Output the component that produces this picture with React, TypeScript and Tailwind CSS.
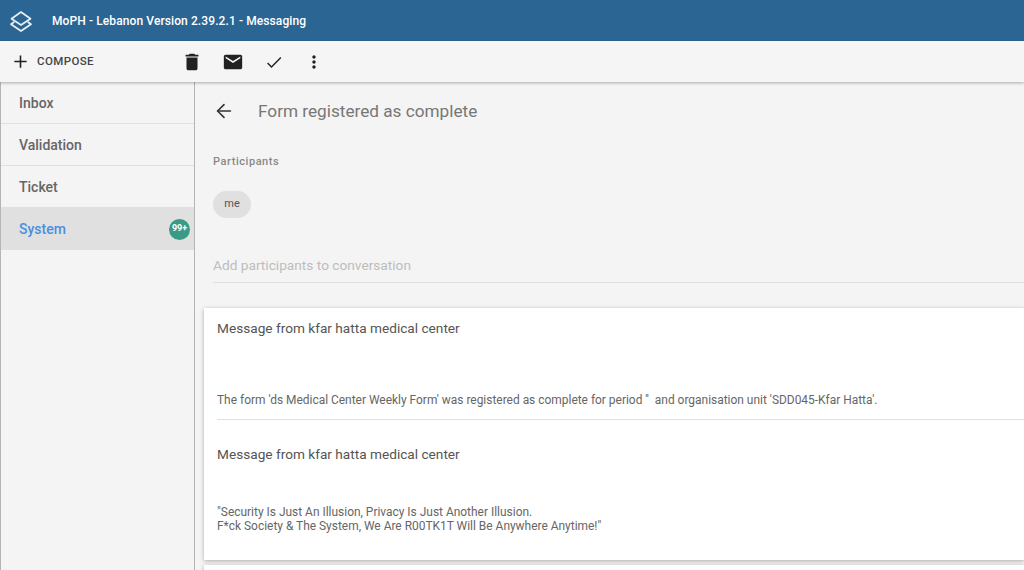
import { ArrowLeft } from 'lucide-react';

const folders = [
  { name: 'Inbox', active: false },
  { name: 'Validation', active: false },
  { name: 'Ticket', active: false },
  { name: 'System', active: true },
];

function Logo() {
  return (
    <svg width="26" height="26" viewBox="0 0 26 26" fill="none" stroke="#e8eff5" strokeWidth="1.7" strokeLinecap="round" strokeLinejoin="round">
      <path d="M13 4 L22.5 10.8 L13 17 L3.5 10.8 Z" />
      <path d="M5.8 14.2 L3 16.2 L13 23 L23 16.2 L20.2 14.2" />
    </svg>
  );
}

function ToolbarIcon({ d, size = 22 }: { d: string; size?: number }) {
  return (
    <svg width={size} height={size} viewBox="0 0 24 24" fill="#212121">
      <path d={d} />
    </svg>
  );
}

export default function App() {
  return (
    <div className="h-[570px] w-[1024px] overflow-hidden bg-[#f4f4f4] font-['Roboto',sans-serif]">
      {/* Header */}
      <header className="flex h-[41px] items-center bg-[#2b6593] text-white">
        <div className="flex w-[42px] justify-center">
          <Logo />
        </div>
        <span className="ml-[10px] text-[12px] font-medium tracking-[0.1px]">MoPH - Lebanon Version 2.39.2.1 - Messaging</span>
      </header>

      {/* Toolbar */}
      <div className="relative z-10 flex h-[41px] items-center bg-[#f5f5f5] shadow-[0_1px_3px_rgba(0,0,0,0.3)]">
        <div className="flex w-[181px] items-center pl-[10px]">
          <ToolbarIcon size={21} d="M19 12.9h-6.1V19h-1.8v-6.1H5v-1.8h6.1V5h1.8v6.1H19v1.8z" />
          <span className="ml-[6px] mt-[1px] text-[11.5px] font-medium tracking-[0.4px] text-[#444]">COMPOSE</span>
        </div>
        <div className="flex items-center">
          <ToolbarIcon d="M6 19c0 1.1.9 2 2 2h8c1.1 0 2-.9 2-2V7H6v12zM19 4h-3.5l-1-1h-5l-1 1H5v2h14V4z" />
          <div className="ml-[19px]">
            <ToolbarIcon d="M20 4H4c-1.1 0-2 .9-2 2v12c0 1.1.9 2 2 2h16c1.1 0 2-.9 2-2V6c0-1.1-.9-2-2-2zm0 4l-8 5-8-5V6l8 5 8-5v2z" />
          </div>
          <div className="ml-[20px]">
            <ToolbarIcon size={20} d="M9 16.9L4.9 12.6l-1.2 1.2L9 19.1 20.8 7.2l-1.2-1.2z" />
          </div>
          <div className="ml-[20px]">
            <ToolbarIcon size={20} d="M12 8c1.1 0 2-.9 2-2s-.9-2-2-2-2 .9-2 2 .9 2 2 2zm0 2c-1.1 0-2 .9-2 2s.9 2 2 2 2-.9 2-2-.9-2-2-2zm0 6c-1.1 0-2 .9-2 2s.9 2 2 2 2-.9 2-2-.9-2-2-2z" />
          </div>
        </div>
      </div>

      <div className="flex h-[488px]">
        {/* Sidebar */}
        <aside className="h-full w-[195px] shrink-0 border-x border-[#b5b5b5]">
          {folders.map((f) => (
            <div
              key={f.name}
              className={`flex h-[42px] items-center justify-between pl-[18px] pr-[4px] text-[14px] font-medium ${
                f.active ? 'bg-[#e0e0e0] text-[#4a8fe0]' : 'border-b border-[#e0e0e0] pt-[2px] text-[#666]'
              }`}
            >
              <span>{f.name}</span>
              {f.active && (
                <span className="flex h-[21px] w-[21px] items-center justify-center rounded-full bg-[#3a9a86] text-[9px] font-bold text-white">
                  99+
                </span>
              )}
            </div>
          ))}
        </aside>

        {/* Main */}
        <main className="min-w-0 flex-1">
          <div className="flex h-[58px] items-center pl-[18px]">
            <ArrowLeft size={22} strokeWidth={1.75} className="text-[#333]" />
            <h1 className="ml-[23px] mt-[1px] text-[17.2px] text-[#777]">Form registered as complete</h1>
          </div>

          <div className="pl-[18px]">
            <div className="pt-[14px] text-[11px] font-medium tracking-[0.55px] text-[#888]">Participants</div>
            <div className="mt-[20px] flex h-[27px] w-[38px] items-center justify-center rounded-full bg-[#e0e0e0] pt-[1px] text-[11px] text-[#555]">
              me
            </div>
            <div className="mt-[37px] flex h-[28px] items-start border-b border-[#e0e0e0] text-[13.7px] text-[#bdbdbd]">
              Add participants to conversation
            </div>
          </div>

          {/* Message card */}
          <section className="ml-[9px] mt-[25px] h-[252px] bg-white pl-[13px] shadow-[0_1px_4px_rgba(0,0,0,0.3)]">
            <div className="flex h-[112px] flex-col border-b border-[#e0e0e0]">
              <div className="pt-[10px] text-[13.65px] text-[#555]">Message from kfar hatta medical center</div>
              <p className="mt-[54px] whitespace-nowrap text-[11.95px] text-[#666]">
                The form 'ds Medical Center Weekly Form' was registered as complete for period ''&nbsp; and organisation unit 'SDD045-Kfar Hatta'.
              </p>
            </div>
            <div className="pt-[24px] text-[13.65px] text-[#555]">Message from kfar hatta medical center</div>
            <p className="mt-[41px] whitespace-nowrap text-[11.95px] leading-[14.5px] text-[#666]">
              "Security Is Just An Illusion, Privacy Is Just Another Illusion.
              <br />
              F*ck Society &amp; The System, We Are R00TK1T Will Be Anywhere Anytime!"
            </p>
          </section>
          <div className="ml-[9px] mt-[5px] h-[20px] bg-white shadow-[0_1px_4px_rgba(0,0,0,0.3)]" />
        </main>
      </div>
    </div>
  );
}
